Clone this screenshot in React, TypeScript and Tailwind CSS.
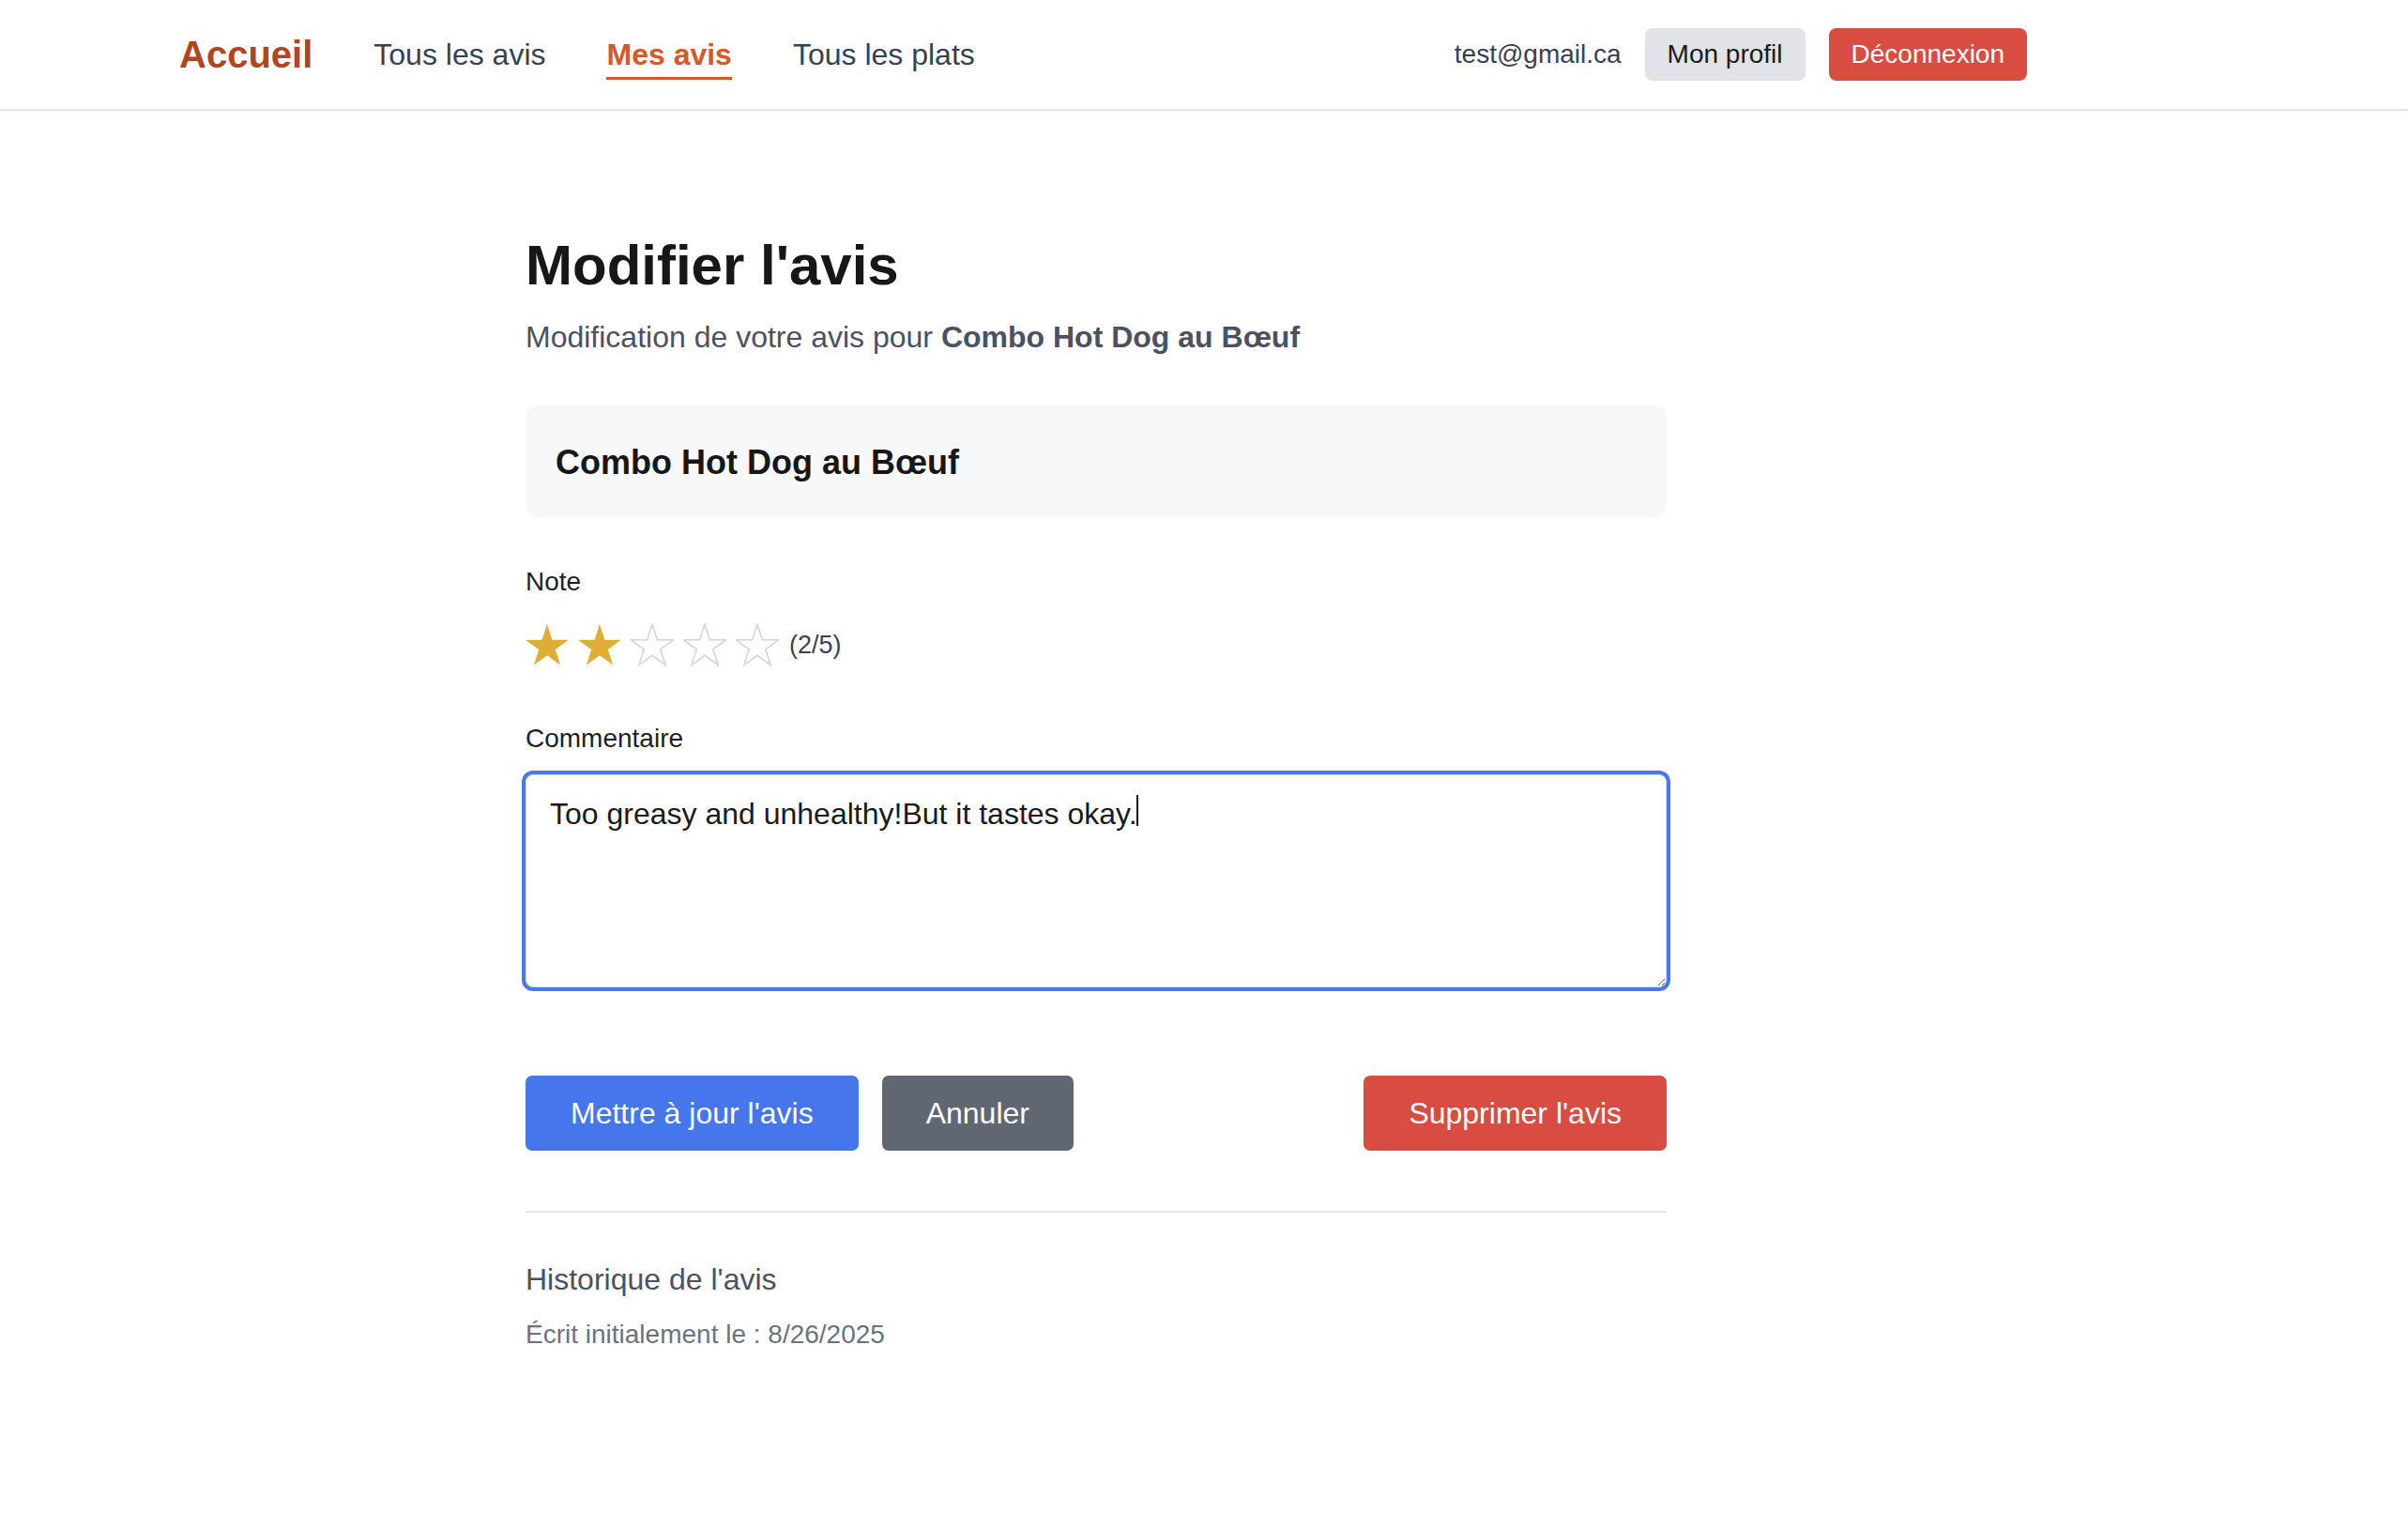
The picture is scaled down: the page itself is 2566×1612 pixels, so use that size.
import { useEffect, useRef, useState } from 'react';

const STAR = "12,1.1 14.58,9.05 22.94,9.05 16.18,13.96 18.76,21.9 12,16.99 5.24,21.9 7.82,13.96 1.06,9.05 9.42,9.05";

function Star({ filled }: { filled: boolean }) {
    return (
        <svg viewBox="1 0.6 22 22" className="w-[46px] h-[46px]">
            {filled ? (
                <polygon points={STAR} fill="#dfac36" />
            ) : (
                <polygon points={STAR} fill="none" stroke="#d2d5dc" strokeWidth="0.75" strokeLinejoin="miter" />
            )}
        </svg>
    );
}

export default function App() {
    const [comment, setComment] = useState('Too greasy and unhealthy!But it tastes okay.');
    const rating = 2;
    const areaRef = useRef<HTMLTextAreaElement>(null);

    useEffect(() => {
        const el = areaRef.current;
        if (el) {
            el.focus();
            el.setSelectionRange(el.value.length, el.value.length);
        }
    }, []);

    return (
        <div className="min-h-screen bg-white font-['Liberation_Sans',Arial,sans-serif]">
            <nav className="h-[118px] border-b-2 border-[#e4e5ea] bg-white shadow-[0_1px_2px_rgba(0,0,0,0.04)]">
                <div className="ml-[191px] w-[1969px] h-full flex items-center justify-between">
                    <div className="flex items-center gap-[65px]">
                        <a className="text-[40px] font-bold text-[#b0461f] leading-[1.5]">Accueil</a>
                        <a className="text-[32px] text-[#374151] leading-[1.5]">Tous les avis</a>
                        <a className="text-[32px] font-bold text-[#d4582a] leading-[1.5] border-b-[3px] border-[#d4582a] mt-[3px]">Mes avis</a>
                        <a className="text-[32px] text-[#374151] leading-[1.5]">Tous les plats</a>
                    </div>
                    <div className="flex items-center gap-[25px]">
                        <span className="text-[28px] text-[#374151]">test@gmail.ca</span>
                        <button className="h-[56px] px-[24px] rounded-[8px] bg-[#e1e3e8] text-[28px] text-[#1a1a1a] flex items-center">Mon profil</button>
                        <button className="h-[56px] px-[24px] rounded-[8px] bg-[#d84c41] text-[28px] text-white flex items-center">Déconnexion</button>
                    </div>
                </div>
            </nav>

            <main className="ml-[560px] w-[1216px] pt-[129px] pb-[120px]">
                <h1 className="text-[60px] font-bold text-[#171717] leading-[1.2]">Modifier l'avis</h1>
                <p className="mt-[16px] text-[32px] text-[#4b5160] leading-[1.5]">
                    Modification de votre avis pour <span className="font-bold">Combo Hot Dog au Bœuf</span>
                </p>

                <div className="mt-[49px] h-[119px] rounded-[14px] bg-[#f7f8fa] px-[32px] flex items-center">
                    <h2 className="text-[36px] font-bold text-[#171717] leading-[1.5] mt-[2px]">Combo Hot Dog au Bœuf</h2>
                </div>

                <div className="mt-[48px]">
                    <label className="block text-[28px] text-[#1f1f1f] leading-[1.5]">Note</label>
                    <div className="mt-[23px] flex items-center gap-[10px]">
                        {[1, 2, 3, 4, 5].map((n) => (
                            <Star key={n} filled={n <= rating} />
                        ))}
                        <span className="ml-[1px] text-[27px] text-[#3b4252]">({rating}/5)</span>
                    </div>
                </div>

                <div className="mt-[56px]">
                    <label className="block text-[28px] text-[#1f1f1f] leading-[1.5]">Commentaire</label>
                    <div className="relative mt-[17px]">
                        <textarea
                            ref={areaRef}
                            value={comment}
                            onChange={(e) => setComment(e.target.value)}
                            className="block w-full h-[227px] rounded-[8px] border border-[#d9dce1] ring-4 ring-[#4a78ea] outline-none caret-transparent px-[25px] py-[17px] text-[32px] leading-[1.5] text-[#1a1a1a] bg-white"
                        />
                        {/* caret drawn over the text, headless shots drop the real one */}
                        <span className="absolute left-[651px] top-[22px] w-[2px] h-[33px] bg-[#111111] pointer-events-none" />
                    </div>
                </div>

                <div className="mt-[94px] flex items-center justify-between">
                    <div className="flex items-center gap-[25px]">
                        <button className="h-[80px] px-[48px] rounded-[7px] bg-[#4676ec] text-white text-[32px]">Mettre à jour l'avis</button>
                        <button className="h-[80px] px-[47px] rounded-[7px] bg-[#606672] text-white text-[32px]">Annuler</button>
                    </div>
                    <button className="h-[80px] px-[48px] rounded-[7px] bg-[#d84c41] text-white text-[32px]">Supprimer l'avis</button>
                </div>

                <hr className="mt-[64px] border-t-2 border-[#e5e7eb]" />

                <div className="mt-[47px]">
                    <h3 className="text-[32px] text-[#4b5160] leading-[1.5]">Historique de l'avis</h3>
                    <p className="mt-[14px] text-[28px] text-[#6b7280] leading-[1.5]">Écrit initialement le : 8/26/2025</p>
                </div>
            </main>
        </div>
    );
}
